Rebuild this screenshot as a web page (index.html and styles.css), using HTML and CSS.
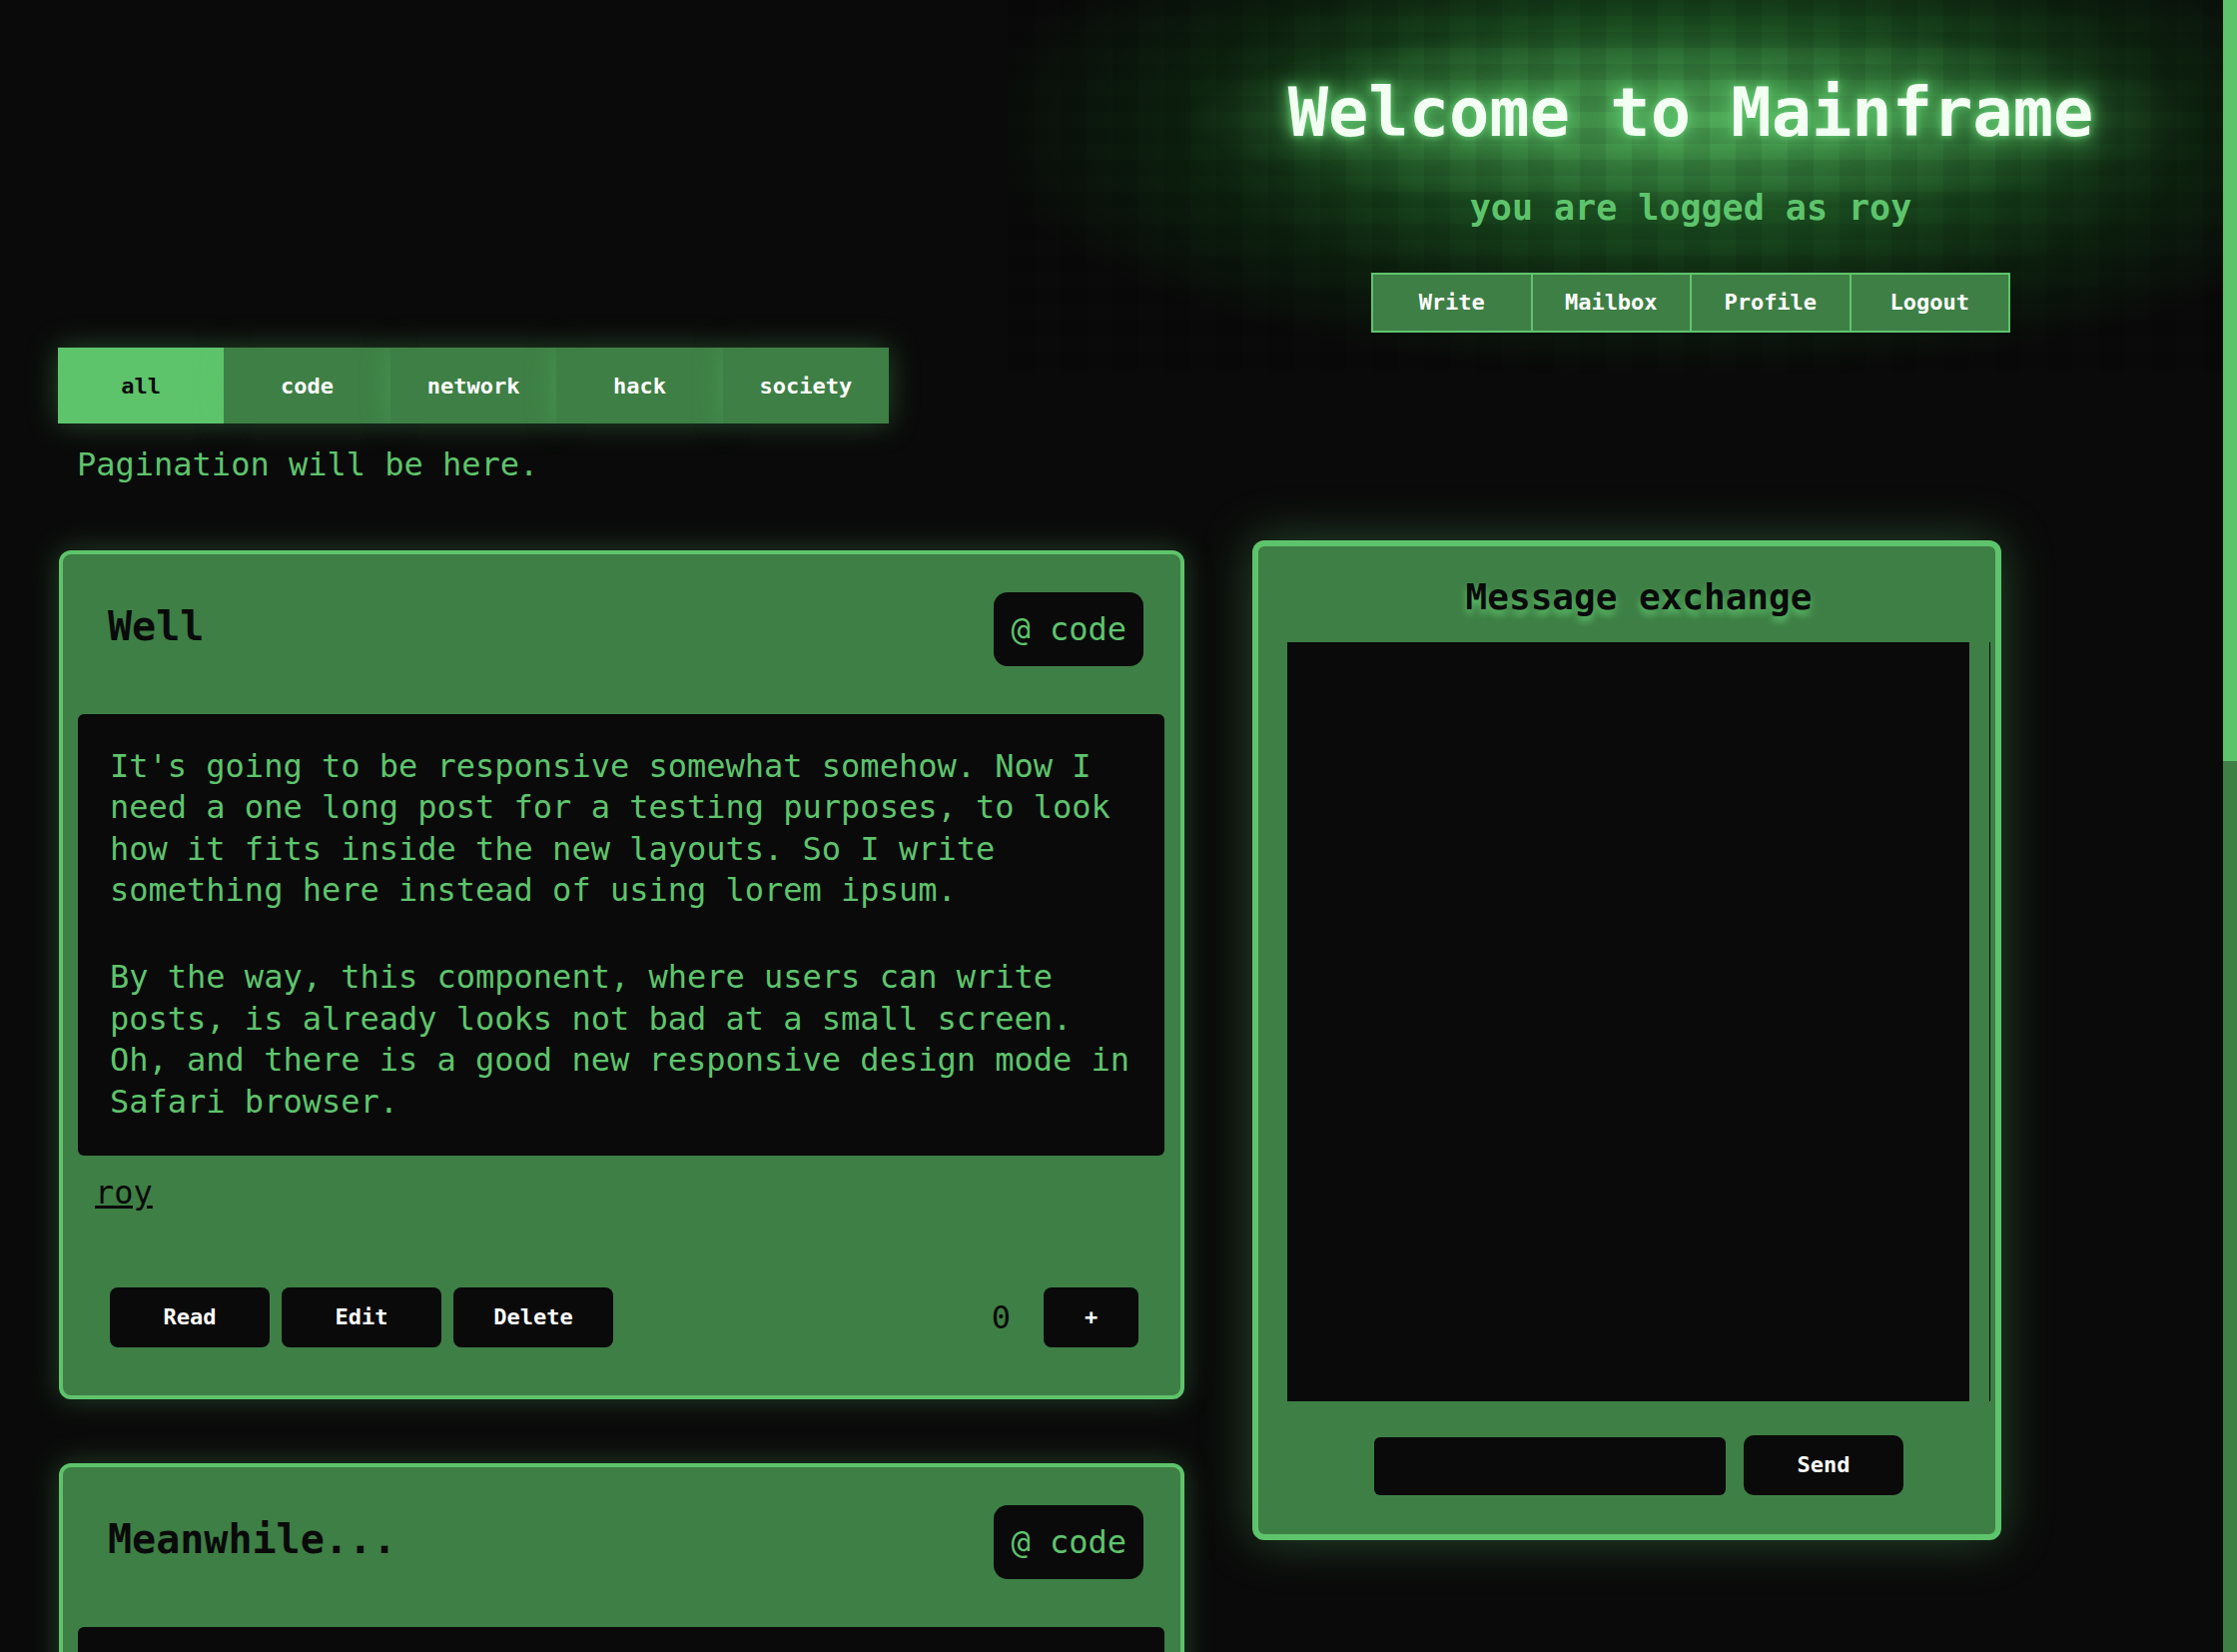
FILE: index.html
```html
<!DOCTYPE html>
<html lang="en">
<head>
<meta charset="utf-8">
<title>Mainframe</title>
<link rel="stylesheet" href="styles.css">
</head>
<body>
<div class="scrollbar" aria-hidden="true"><div class="scrollbar-thumb"></div></div>

<header class="top">
  <div class="hero">
    <h1 class="hero-title">Welcome to Mainframe</h1>
    <p class="hero-sub">you are logged as roy</p>
    <nav class="nav">
      <a class="nav-btn">Write</a>
      <a class="nav-btn">Mailbox</a>
      <a class="nav-btn">Profile</a>
      <a class="nav-btn">Logout</a>
    </nav>
  </div>
</header>

<div class="filters">
  <button class="tab active">all</button>
  <button class="tab">code</button>
  <button class="tab">network</button>
  <button class="tab">hack</button>
  <button class="tab">society</button>
</div>
<p class="pagination">Pagination will be here.</p>

<main class="main">
  <section class="posts">
    <article class="post">
      <div class="post-head">
        <h2 class="post-title">Well</h2>
        <span class="tag">@ code</span>
      </div>
      <div class="post-body">
        <p>It's going to be responsive somewhat somehow. Now I need a one long post for a testing purposes, to look how it fits inside the new layouts. So I write something here instead of using lorem ipsum.</p>
        <p>By the way, this component, where users can write posts, is already looks not bad at a small screen. Oh, and there is a good new responsive design mode in Safari browser.</p>
      </div>
      <a class="author">roy</a>
      <div class="actions">
        <button class="btn">Read</button>
        <button class="btn">Edit</button>
        <button class="btn">Delete</button>
        <span class="spacer"></span>
        <span class="count">0</span>
        <button class="btn btn-plus">+</button>
      </div>
    </article>

    <article class="post">
      <div class="post-head">
        <h2 class="post-title">Meanwhile...</h2>
        <span class="tag">@ code</span>
      </div>
      <div class="post-body">
        <p>Meanwhile the mainframe keeps humming. The message exchange works, the mailbox works, and the posts can be filtered by category now.</p>
        <p>Next step is the pagination, so the list of posts does not grow forever on a single page.</p>
      </div>
      <a class="author">roy</a>
      <div class="actions">
        <button class="btn">Read</button>
        <button class="btn">Edit</button>
        <button class="btn">Delete</button>
        <span class="spacer"></span>
        <span class="count">0</span>
        <button class="btn btn-plus">+</button>
      </div>
    </article>

    <article class="post">
      <div class="post-head">
        <h2 class="post-title">Hello</h2>
        <span class="tag">@ network</span>
      </div>
      <div class="post-body">
        <p>Hello, world. This is the very first post on the mainframe. Everything is green and everything is monospaced, as it should be.</p>
        <p>Write something here and let the others read it.</p>
      </div>
      <a class="author">roy</a>
      <div class="actions">
        <button class="btn">Read</button>
        <button class="btn">Edit</button>
        <button class="btn">Delete</button>
        <span class="spacer"></span>
        <span class="count">0</span>
        <button class="btn btn-plus">+</button>
      </div>
    </article>
  </section>

  <aside class="chat">
    <h2 class="chat-title">Message exchange</h2>
    <div class="chat-scroll"><div class="chat-log"></div></div>
    <form class="chat-form">
      <input class="chat-input" type="text">
      <button class="btn btn-send" type="button">Send</button>
    </form>
  </aside>
</main>
</body>
</html>
```

FILE: styles.css
```css
html {
  background: #0a0a0a;
}

body {
  margin: 0 14px 0 0;
  font-family: "DejaVu Sans Mono", "Liberation Mono", monospace;
  color: #5ec46c;
}

/* page scrollbar (custom themed) */
.scrollbar {
  position: fixed;
  top: 0;
  right: 0;
  width: 14px;
  height: 100vh;
  background: #3e7f45;
  z-index: 10;
}

.scrollbar-thumb {
  height: 762px;
  background: #5ec46c;
}

/* ---------- header ---------- */
.top {
  display: flex;
  justify-content: flex-end;
}

.hero {
  position: relative;
  isolation: isolate;
  width: 1066px;
  display: flex;
  flex-direction: column;
  align-items: center;
  padding-top: 73px;
}

.hero::before {
  content: "";
  position: absolute;
  z-index: -1;
  top: 0;
  bottom: -40px;
  left: -150px;
  right: 0;
  background:
    linear-gradient(90deg, rgba(0, 0, 0, 0.08) 50%, rgba(0, 0, 0, 0) 50%) 0 0 / 52px 100%,
    linear-gradient(rgba(0, 0, 0, 0.08) 50%, rgba(0, 0, 0, 0) 50%) 0 0 / 100% 32px,
    radial-gradient(ellipse 500px 95px at 683px 118px, rgba(110, 210, 120, 0.6), rgba(110, 210, 120, 0) 100%),
    radial-gradient(ellipse 720px 250px at 683px 125px, rgba(45, 135, 55, 0.85) 0%, rgba(32, 105, 40, 0.65) 45%, rgba(16, 66, 20, 0.4) 72%, rgba(10, 30, 12, 0) 100%);
}

.hero-title {
  margin: 0;
  font-size: 67px;
  line-height: 80px;
  font-weight: bold;
  color: #f4fff4;
  text-shadow: 0 0 6px #5ec46c, 0 0 16px #5ec46c, 0 0 30px rgba(94, 196, 108, 0.7);
  white-space: nowrap;
}

.hero-sub {
  margin: 34px 0 0;
  font-size: 35px;
  line-height: 42px;
  font-weight: bold;
  color: #5ec46c;
}

.nav {
  display: flex;
  width: 640px;
  box-sizing: border-box;
  margin-top: 44px;
  border: 2px solid #5ec46c;
  background: #3e7f45;
}

.nav-btn {
  flex: 1;
  height: 56px;
  line-height: 56px;
  text-align: center;
  font-size: 22px;
  font-weight: bold;
  color: #ffffff;
}

.nav-btn + .nav-btn {
  border-left: 2px solid #5ec46c;
}

/* ---------- filters ---------- */
.filters {
  display: flex;
  width: 832px;
  margin: 15px 0 0 58px;
}

.tab {
  flex: 1;
  height: 76px;
  border: 0;
  padding: 0;
  background: #3e7f45;
  color: #ffffff;
  font-family: inherit;
  font-size: 22px;
  font-weight: bold;
  box-shadow: 0 0 30px rgba(94, 196, 108, 0.35);
}

.tab.active {
  background: #5ec46c;
  color: #0a0a0a;
}

.pagination {
  margin: 21px 0 0 77px;
  font-size: 32px;
  line-height: 41.6px;
}

/* ---------- main ---------- */
.main {
  display: flex;
  align-items: flex-start;
  gap: 68px;
  margin-top: 54px;
  padding: 0 0 362px 59px;
}

.posts {
  width: 1127px;
  display: flex;
  flex-direction: column;
  gap: 64px;
  padding-top: 10px;
}

.post {
  box-sizing: border-box;
  border: 4px solid #5ec46c;
  border-radius: 12px;
  background: #3e7f45;
  box-shadow: 0 0 30px rgba(94, 196, 108, 0.3);
}

.post-head {
  display: flex;
  align-items: center;
  justify-content: space-between;
  padding: 38px 37px 48px 45px;
}

.post-title {
  margin: 0 0 5px;
  font-size: 40px;
  line-height: 48px;
  font-weight: bold;
  color: #0a0a0a;
}

.tag {
  background: #0a0a0a;
  color: #5ec46c;
  font-size: 32px;
  line-height: 74px;
  padding: 0 17px;
  border-radius: 14px;
}

.post-body {
  margin: 0 16px 0 15px;
  padding: 32px 32px 33px;
  background: #0a0a0a;
  border-radius: 6px;
  font-size: 32px;
  line-height: 41.6px;
  color: #5ec46c;
}

.post-body p {
  margin: 0;
}

.post-body p + p {
  margin-top: 45px;
}

.author {
  display: block;
  width: max-content;
  margin: 17px 0 0 32px;
  font-size: 32px;
  line-height: 41.6px;
  color: #0a0a0a;
  text-decoration: underline;
}

.actions {
  display: flex;
  align-items: center;
  gap: 12px;
  margin-top: 73px;
  padding: 0 42px 48px 47px;
}

.spacer {
  flex: 1;
}

.count {
  margin-right: 21px;
  font-size: 32px;
  color: #0a0a0a;
}

.btn {
  width: 160px;
  height: 60px;
  border: 0;
  padding: 0;
  border-radius: 8px;
  background: #0a0a0a;
  color: #ffffff;
  font-family: inherit;
  font-size: 22px;
  font-weight: bold;
}

.btn-plus {
  width: 95px;
}

/* ---------- chat ---------- */
.chat {
  width: 750px;
  box-sizing: border-box;
  border: 6px solid #5ec46c;
  border-radius: 12px;
  background: #3e7f45;
  padding: 29px 5px 39px 29px;
  box-shadow: 0 0 50px rgba(94, 196, 108, 0.35);
}

.chat-title {
  margin: 0;
  text-align: center;
  font-size: 36px;
  line-height: 43px;
  font-weight: bold;
  color: #0a0a0a;
  text-shadow: 0 5px 7px #5ec46c;
}

.chat-scroll {
  margin-top: 24px;
  height: 760px;
  border-right: 1px solid #0a0a0a;
}

.chat-log {
  width: 683px;
  height: 100%;
  background: #0a0a0a;
}

.chat-form {
  display: flex;
  justify-content: center;
  align-items: flex-end;
  gap: 18px;
  margin: 34px 0 0;
}

.chat-input {
  width: 352px;
  height: 58px;
  box-sizing: border-box;
  border: 0;
  border-radius: 6px;
  background: #0a0a0a;
  color: #5ec46c;
  font-family: inherit;
  font-size: 22px;
  padding: 0 12px;
}

.btn-send {
  border-radius: 10px;
}
```
